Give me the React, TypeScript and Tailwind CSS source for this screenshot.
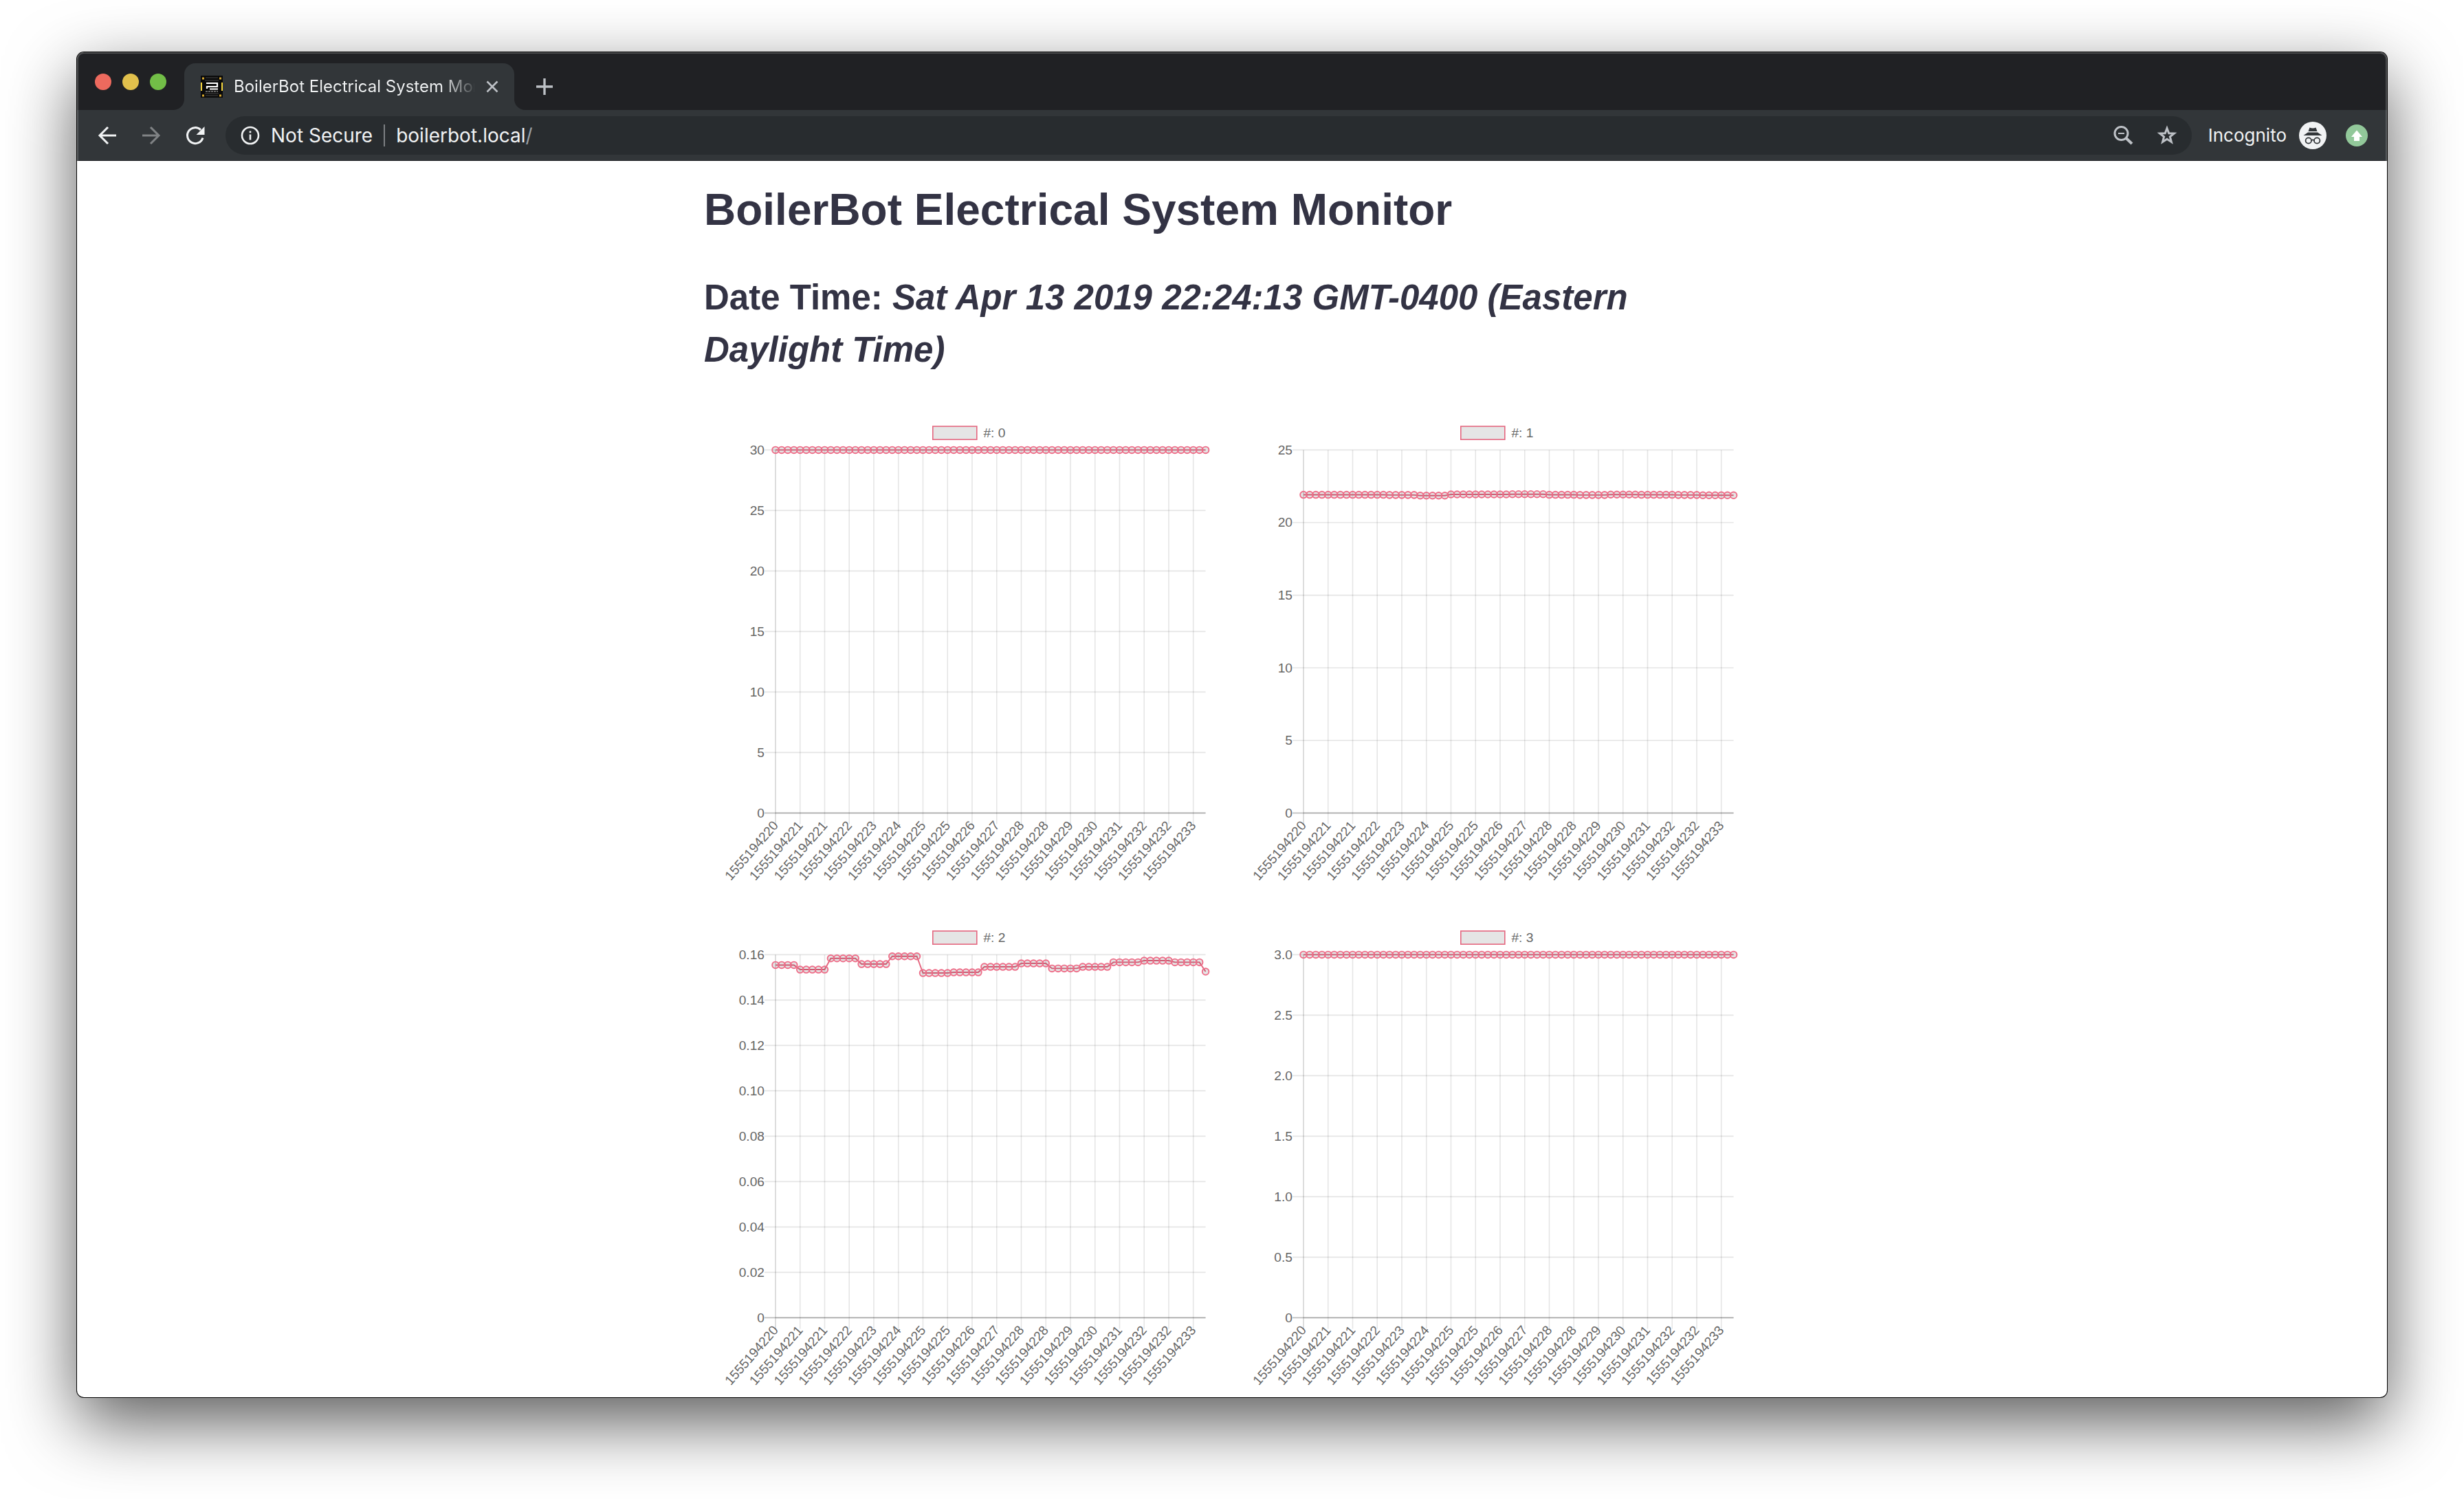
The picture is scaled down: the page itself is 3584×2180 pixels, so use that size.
import React from "react";

type Series = { label: string; max: number; step: number; digits: number; runs: [number, number][] };

const TIMES = [220, 221, 221, 222, 223, 224, 225, 225, 226, 227, 228, 228, 229, 230, 231, 232, 232, 233].map((n) => `1555194${n}`);

const CHARTS: Series[] = [
  { label: "#: 0", max: 30, step: 5, digits: 0, runs: [[71, 30]] },
  {
    label: "#: 1", max: 25, step: 5, digits: 0,
    runs: [[14, 21.915], [5, 21.9], [5, 21.86], [10, 21.94], [6, 21.955], [5, 21.915], [5, 21.9], [5, 21.93], [6, 21.915], [4, 21.9], [6, 21.88]],
  },
  {
    label: "#: 2", max: 0.16, step: 0.02, digits: 2,
    runs: [[4, 0.15545], [5, 0.15343], [5, 0.15838], [5, 0.15586], [5, 0.15929], [5, 0.15192], [5, 0.15222], [6, 0.15465], [5, 0.15616], [5, 0.15394], [5, 0.15465], [5, 0.15667], [5, 0.15737], [5, 0.15667], [1, 0.15253]],
  },
  { label: "#: 3", max: 3, step: 0.5, digits: 1, runs: [[71, 3]] },
];

const LEFT = 65;
const RIGHT = 456;
const TOP = 31.5;
const BOTTOM = 361.5;

function LineChart({ series }: { series: Series }) {
  const values = series.runs.flatMap(([count, value]) => Array<number>(count).fill(value));
  const px = (i: number) => LEFT + (i * (RIGHT - LEFT)) / 70;
  const py = (v: number) => BOTTOM - (v / series.max) * (BOTTOM - TOP);
  const tickCount = Math.round(series.max / series.step);
  const ticks = Array.from({ length: tickCount + 1 }, (_, i) => i * series.step);
  const points = values.map((v, i) => `${px(i)},${py(v)}`).join(" ");

  return (
    <svg viewBox="0 0 480 458.75" className="block w-full" role="img" aria-label={`Line chart ${series.label}`} fontFamily="'Liberation Sans', Arial, sans-serif" fontSize="12" fill="#666">
      <rect x="208" y="10" width="40" height="12" fill="rgba(0,0,0,0.1)" stroke="#e4667f" />
      <text x="254" y="20">{series.label}</text>
      {TIMES.map((time, i) => {
        const x = px(i * 4);
        return (
          <g key={i}>
            <line x1={x} x2={x} y1={TOP} y2={BOTTOM + 10} stroke="#000" strokeOpacity={i ? 0.1 : 0.17} />
            <text x={x} y={BOTTOM + 9} textAnchor="end" dominantBaseline="central" transform={`rotate(-49 ${x} ${BOTTOM + 9})`}>{time}</text>
          </g>
        );
      })}
      {ticks.map((tick, i) => (
        <g key={i}>
          <line x1={LEFT - 10} x2={RIGHT} y1={py(tick)} y2={py(tick)} stroke="#000" strokeOpacity={i ? 0.1 : 0.25} />
          <text x={LEFT - 10} y={py(tick) + 4} textAnchor="end">{i ? tick.toFixed(series.digits) : "0"}</text>
        </g>
      ))}
      <line x1={LEFT} x2={RIGHT} y1={BOTTOM} y2={BOTTOM} stroke="#000" strokeOpacity="0.1" />
      <polyline points={points} fill="none" stroke="#e4667f" strokeWidth="1.2" />
      {values.map((v, i) => (
        <circle key={i} cx={px(i)} cy={py(v)} r="3" fill="rgba(0,0,0,0.1)" stroke="#ee6d88" strokeWidth="1.2" />
      ))}
    </svg>
  );
}

function Favicon() {
  return (
    <svg viewBox="0 0 32 32" className="size-8 shrink-0" aria-hidden="true">
      <rect width="32" height="32" fill="#0a0a0a" />
      <path d="M1 10v12M31 10v12" stroke="#f5d63c" strokeWidth="2" />
      <path d="M2 4h3M30 4h-3M2 29h3M30 29h-3" stroke="#d9a92e" strokeWidth="3" />
      <path d="M7 3h18M7 29h18M6 7h20M6 26h20" stroke="#333" strokeWidth="1.500" />
      <path d="M8 11h16v5H9v3M13 19.500h12" fill="none" stroke="#fff" strokeWidth="2.200" />
      <path d="M7 23h18" stroke="#666" strokeWidth="2" strokeDasharray="3 1" />
    </svg>
  );
}

function TabStrip() {
  return (
    <div className="flex h-[84px] items-start bg-[#202124] pl-[26px]">
      <div className="flex gap-4 pt-[31px]">
        <button aria-label="Close window" className="size-6 rounded-full bg-[#ed6a5e]" />
        <button aria-label="Minimize window" className="size-6 rounded-full bg-[#e1c04c]" />
        <button aria-label="Zoom window" className="size-6 rounded-full bg-[#72be47]" />
      </div>
      <div className="mt-4 flex h-[68px] items-end">
        <svg viewBox="0 0 16 16" className="ml-2.5 size-4" aria-hidden="true"><path d="M16 0v16H0A16 16 0 0 0 16 0" fill="#323639" /></svg>
        <div className="flex h-[68px] w-[480px] items-center rounded-t-2xl bg-[#323639] pl-6 pr-[22px]">
          <Favicon />
          <span className="ml-4 w-[350px] overflow-hidden whitespace-nowrap bg-linear-to-r from-[#f1f3f4] from-86% to-[#f1f3f4]/10 bg-clip-text text-[24px] leading-8 text-transparent">BoilerBot Electrical System Monitor</span>
          <button aria-label="Close tab" className="ml-4 flex size-5 items-center justify-center">
            <svg viewBox="0 0 20 20" className="size-5" fill="none" stroke="#bdc1c6" strokeWidth="2.600"><path d="M2.500 2.500l15 15M17.500 2.500l-15 15" /></svg>
          </button>
        </div>
        <svg viewBox="0 0 16 16" className="size-4" aria-hidden="true"><path d="M0 0v16h16A16 16 0 0 1 0 0" fill="#323639" /></svg>
      </div>
      <button aria-label="New tab" className="ml-4 mt-[38px] size-6">
        <svg viewBox="0 0 24 24" className="size-6" stroke="#bdc1c6" strokeWidth="3.400"><path d="M12 0v24M0 12h24" /></svg>
      </button>
    </div>
  );
}

function Toolbar() {
  return (
    <div className="flex h-[74px] items-center border-b border-[#202124] bg-[#323639] px-7 text-[#f1f3f4]">
      <div className="flex gap-8">
        <button aria-label="Back" className="size-8">
          <svg viewBox="0 0 32 32" className="size-8" fill="none" stroke="#f1f3f4" strokeWidth="3"><path d="M29 16H5M17 4L5 16l12 12" /></svg>
        </button>
        <button aria-label="Forward" className="size-8">
          <svg viewBox="0 0 32 32" className="size-8" fill="none" stroke="#808385" strokeWidth="3"><path d="M3 16h24M15 4l12 12-12 12" /></svg>
        </button>
        <button aria-label="Reload" className="size-8">
          <svg viewBox="0 0 32 32" className="size-8" fill="none" stroke="#f1f3f4" strokeWidth="3"><path d="M27 19.500A11.500 11.500 0 1 1 24 7.800" /><path d="M29.500 3v12h-12z" fill="#f1f3f4" stroke="none" /></svg>
        </button>
      </div>
      <div className="ml-7 flex h-14 flex-1 items-center rounded-full bg-[#282c2f] pl-[22px] pr-5 text-[28px] leading-9">
        <svg viewBox="0 0 28 28" className="size-7" fill="none" stroke="#f1f3f4" strokeWidth="2.600" aria-hidden="true"><circle cx="14" cy="14" r="12" /><path d="M14 12.500v8M14 7.500v2.800" /></svg>
        <span className="ml-4">Not Secure</span>
        <span className="ml-4 h-8 w-0.5 bg-[#7d8083]" />
        <div className="ml-4 flex h-9 flex-1">
          <input aria-label="Address" defaultValue="boilerbot.local" className="block h-9 field-sizing-content bg-transparent p-0 outline-none" />
          <span className="text-[#9aa0a6]">/</span>
        </div>
        <button aria-label="Zoom" className="size-8">
          <svg viewBox="0 0 32 32" className="size-8" fill="none" stroke="#bdc1c6" strokeWidth="3"><circle cx="13.500" cy="13" r="9.500" /><path d="M20 19.500l9 8.500" strokeWidth="4" /><path d="M9 13h9" strokeWidth="2" /></svg>
        </button>
        <button aria-label="Bookmark this page" className="ml-8 size-8">
          <svg viewBox="0 0 32 32" className="size-8" fill="none" stroke="#bdc1c6" strokeWidth="3"><path d="M16 5.500l2.700 7.200 7.700.4-6 4.800 2 7.500-6.400-4.200-6.400 4.200 2-7.500-6-4.800 7.700-.4z" /></svg>
        </button>
      </div>
      <span className="ml-6 text-[26px] leading-9">Incognito</span>
      <svg viewBox="0 0 40 40" className="ml-[18px] size-10" aria-hidden="true">
        <circle cx="20" cy="20" r="20" fill="#f1f3f4" />
        <path d="M15.500 8.500q4.500 1.800 9 0L26.500 14h-13zM13 15.500h14l6.500 4.500H6.500z" fill="#323639" />
        <g fill="none" stroke="#323639" strokeWidth="1.800"><circle cx="13.800" cy="27.500" r="4.200" /><circle cx="26.200" cy="27.500" r="4.200" /><path d="M18 27q2-1.200 4 0" /></g>
      </svg>
      <button aria-label="Update available" className="ml-7 size-8">
        <svg viewBox="0 0 32 32" className="size-8"><circle cx="16" cy="16" r="16" fill="#92c89a" /><path d="M16 8.500l8 9.500h-4v6h-8v-6H8z" fill="#fff" /></svg>
      </button>
    </div>
  );
}

export default function App() {
  return (
    <div className="h-screen overflow-hidden bg-white px-28 pb-[148px] pt-[76px] font-['Inter',sans-serif]">
      <div className="relative flex h-full flex-col overflow-hidden rounded-[10px] bg-white shadow-[0_0_0_1px_#000,0_36px_100px_rgba(0,0,0,0.65)]">
        <TabStrip />
        <Toolbar />
        <main className="min-h-0 flex-1 overflow-hidden font-['Liberation_Sans',Arial,sans-serif] font-bold text-[#333344]">
          <div className="mx-auto max-w-[1536px]">
            <h1 className="pt-[23px] text-[64px] leading-[96px]">BoilerBot Electrical System Monitor</h1>
            <h2 className="pt-[42px] text-[51px] leading-[76px]">Date Time: <i>Sat Apr 13 2019 22:24:13 GMT-0400 (Eastern Daylight Time)</i></h2>
            <div className="grid grid-cols-2 pt-[57px] font-normal">
              {CHARTS.map((series) => <LineChart key={series.label} series={series} />)}
            </div>
          </div>
        </main>
        <div className="pointer-events-none absolute inset-x-0 top-0 h-[158px] rounded-t-[10px] border-x-2 border-t-2 border-white/20" />
      </div>
    </div>
  );
}
